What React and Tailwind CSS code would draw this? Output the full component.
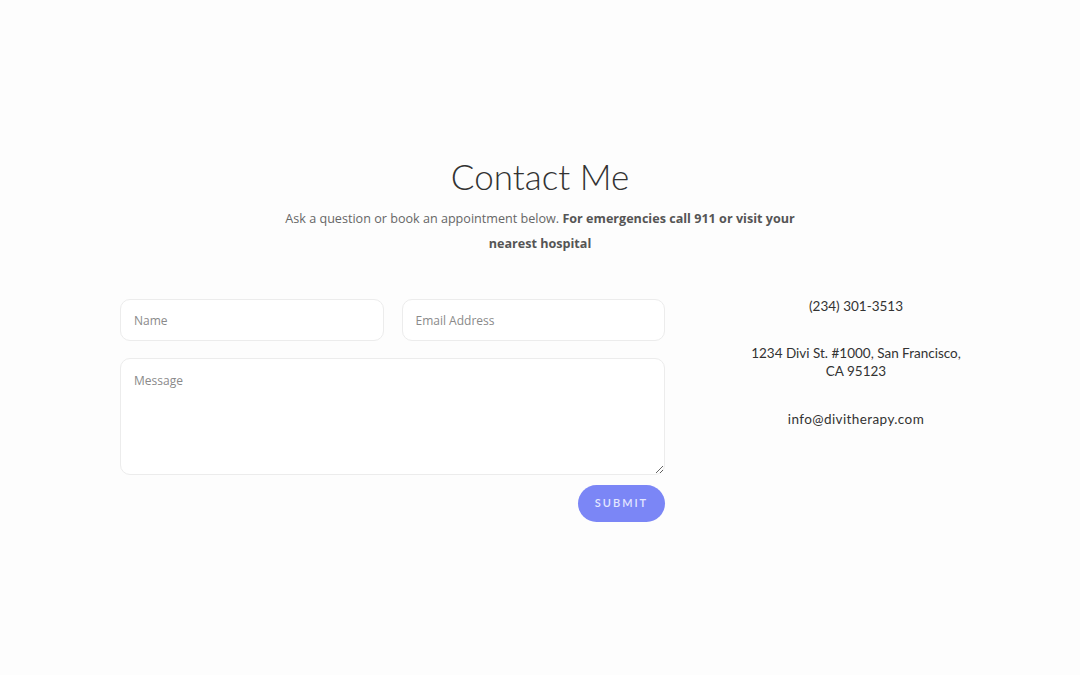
export default function App() {
  const field =
    'rounded-[10px] border border-[#ececec] bg-white px-[13px] text-[12px] text-[#555] outline-none placeholder:text-[#8a8a8a]';

  return (
    <div
      className="flex h-[675px] w-full flex-col items-center bg-[#fdfdfd]"
      style={{ fontFamily: '"Open Sans", sans-serif' }}
    >
      <h1
        className="mt-[154px] text-[35px] font-light leading-[44px] text-[#333]"
        style={{ fontFamily: 'Lato, "Noto Sans", sans-serif' }}
      >
        Contact Me
      </h1>
      <p className="mt-[8px] w-[520px] text-center text-[12.6px] leading-[25px] text-[#666]">
        Ask a question or book an appointment below.{' '}
        <strong className="font-bold text-[#555]">
          For emergencies call 911 or visit your nearest hospital
        </strong>
      </p>

      <div className="mt-[43px] flex w-full pl-[120px]">
        <form className="flex w-[545px] flex-col">
          <div className="flex gap-[18px]">
            <input className={`${field} h-[42px] flex-1`} placeholder="Name" />
            <input className={`${field} h-[42px] flex-1`} placeholder="Email Address" />
          </div>
          <textarea
            className={`${field} mt-[17px] h-[117px] resize-y pt-[13px]`}
            placeholder="Message"
          />
          <div className="mt-[10px] flex justify-end">
            <button
              type="button"
              className="h-[37px] w-[87px] rounded-full bg-[#7b86f6] text-[11px] font-semibold tracking-[2px] text-[#e4e7ff]"
              style={{ fontFamily: 'Lato, sans-serif' }}
            >
              SUBMIT
            </button>
          </div>
        </form>

        <div
          className="ml-[80px] flex w-[222px] flex-col items-center text-center text-[13.5px] leading-[18px] text-[#333]"
          style={{ fontFamily: 'Lato, sans-serif' }}
        >
          <p className="mt-[-2px]">(234) 301-3513</p>
          <p className="mt-[29px]">1234 Divi St. #1000, San Francisco, CA 95123</p>
          <p className="mt-[30px] tracking-[0.4px]">info@divitherapy.com</p>
        </div>
      </div>
    </div>
  );
}
